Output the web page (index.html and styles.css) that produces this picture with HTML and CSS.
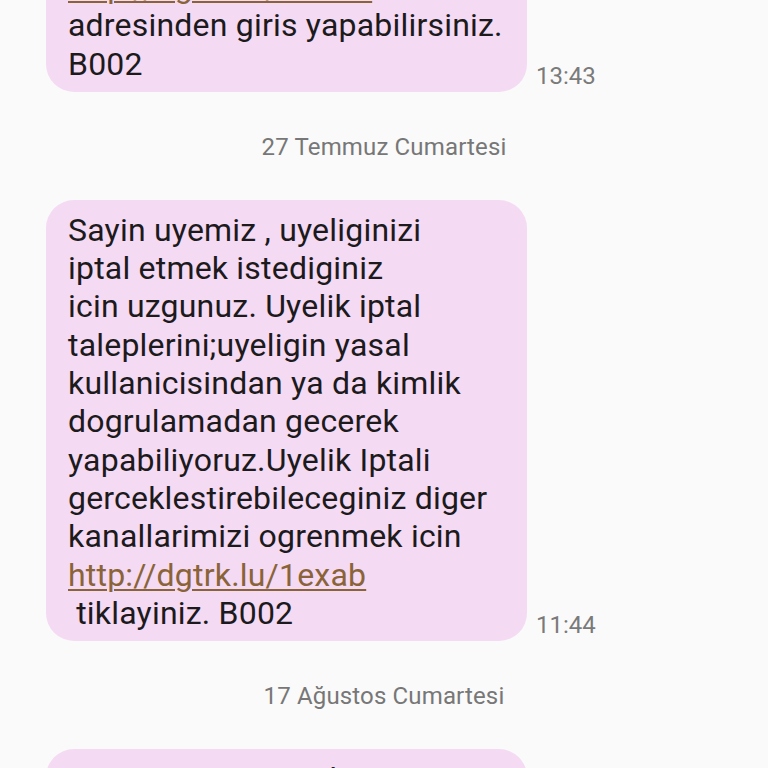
FILE: index.html
```html
<!DOCTYPE html>
<html lang="tr">
<head>
<meta charset="utf-8">
<link rel="stylesheet" href="styles.css">
</head>
<body>
<div class="thread">
  <div class="msg first">
    <div class="bubble"><a class="link" href="#">http://dgtrk.lu/1dxkw</a><br>adresinden giris yapabilirsiniz.<br>B002</div>
    <div class="time">13:43</div>
  </div>
  <div class="date">27 Temmuz Cumartesi</div>
  <div class="msg">
    <div class="bubble">Sayin uyemiz , uyeliginizi<br>iptal etmek istediginiz<br>icin uzgunuz. Uyelik iptal<br>taleplerini;uyeligin yasal<br>kullanicisindan ya da kimlik<br>dogrulamadan gecerek<br>yapabiliyoruz.Uyelik Iptali<br>gerceklestirebileceginiz diger<br>kanallarimizi ogrenmek icin<br><a class="link" href="#">http://dgtrk.lu/1exab</a><br>&nbsp;tiklayiniz. B002</div>
    <div class="time">11:44</div>
  </div>
  <div class="date">17 Ağustos Cumartesi</div>
  <div class="msg">
    <div class="bubble">Sayin uyemiz , uyeliginizi<br>iptal etmek istediginiz</div>
    <div class="time"></div>
  </div>
</div>
</body>
</html>
```
FILE: styles.css
```css
html, body {
  margin: 0;
  padding: 0;
  background: #fafafa;
  height: 768px;
  overflow: hidden;
}
body {
  font-family: Roboto, "Noto Sans", sans-serif;
}
.thread {
  margin-top: -43px;
  padding-left: 46px;
  display: flex;
  flex-direction: column;
}
.msg {
  display: flex;
  align-items: flex-end;
}
.bubble {
  width: 481px;
  box-sizing: border-box;
  background: #f4daf3;
  border-radius: 28px;
  padding: 11px 22px 9px 22px;
  font-size: 32px;
  letter-spacing: 0.2px;
  line-height: 38.3px;
  color: #1c1a1c;
}
.link {
  color: #8a6438;
  text-decoration: underline;
  text-underline-offset: 3px;
  text-decoration-thickness: 2px;
}
.time {
  margin-left: 9px;
  margin-bottom: 3px;
  font-size: 24px;
  line-height: 26px;
  color: #7a7a7a;
}
.date {
  text-align: center;
  margin: 42px 0 40px -46px;
  font-size: 24px;
  letter-spacing: 0.15px;
  line-height: 26px;
  color: #777777;
}
```
